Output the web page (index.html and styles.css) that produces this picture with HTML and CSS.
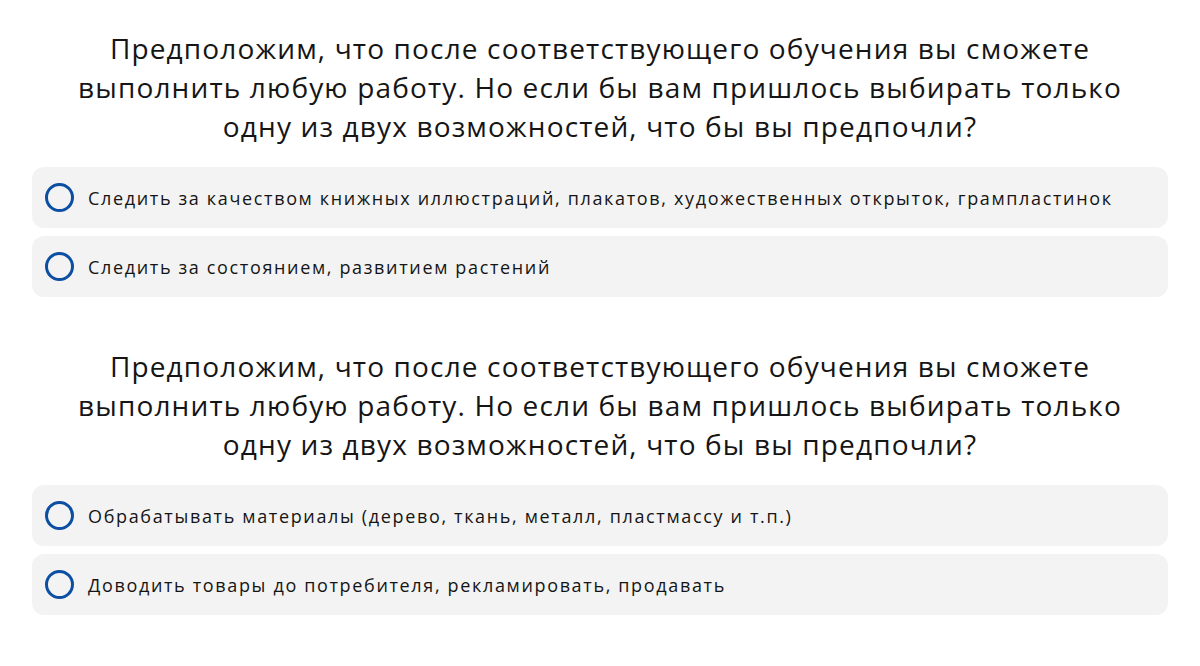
FILE: index.html
```html
<!DOCTYPE html>
<html lang="ru">
<head>
<meta charset="utf-8">
<title>Тест</title>
<link rel="stylesheet" href="styles.css">
</head>
<body>
<main class="quiz">
  <section class="question">
    <h2 class="question-title">Предположим, что после соответствующего обучения вы сможете<br>выполнить любую работу. Но если бы вам пришлось выбирать только<br>одну из двух возможностей, что бы вы предпочли?</h2>
    <div class="options">
      <label class="option"><span class="radio"></span><span class="option-text">Следить за качеством книжных иллюстраций, плакатов, художественных открыток, грампластинок</span></label>
      <label class="option"><span class="radio"></span><span class="option-text">Следить за состоянием, развитием растений</span></label>
    </div>
  </section>
  <section class="question">
    <h2 class="question-title">Предположим, что после соответствующего обучения вы сможете<br>выполнить любую работу. Но если бы вам пришлось выбирать только<br>одну из двух возможностей, что бы вы предпочли?</h2>
    <div class="options">
      <label class="option"><span class="radio"></span><span class="option-text">Обрабатывать материалы (дерево, ткань, металл, пластмассу и т.п.)</span></label>
      <label class="option"><span class="radio"></span><span class="option-text">Доводить товары до потребителя, рекламировать, продавать</span></label>
    </div>
  </section>
</main>
</body>
</html>
```
FILE: styles.css
```css
* { box-sizing: border-box; }
html, body {
  margin: 0;
  padding: 0;
  background: #ffffff;
}
body {
  font-family: "Open Sans", "DejaVu Sans", sans-serif;
  color: #151515;
}
.quiz {
  padding: 29px 32px 0 32px;
  display: flex;
  flex-direction: column;
  gap: 50px;
}
.question {
  display: flex;
  flex-direction: column;
  gap: 21px;
}
.question-title {
  margin: 0;
  font-size: 28px;
  font-weight: 400;
  line-height: 39px;
  letter-spacing: 1.15px;
  text-align: center;
  color: #151515;
}
.options {
  display: flex;
  flex-direction: column;
  gap: 8px;
}
.option {
  display: flex;
  align-items: center;
  gap: 14px;
  height: 61px;
  padding: 0 14px 0 13px;
  background: #f3f3f3;
  border-radius: 12px;
}
.radio {
  flex: 0 0 auto;
  width: 29px;
  height: 29px;
  border: 3px solid #0b4ea2;
  border-radius: 50%;
  background: transparent;
}
.option-text {
  font-size: 18px;
  line-height: 24px;
  letter-spacing: 1.65px;
  color: #151515;
}
```
